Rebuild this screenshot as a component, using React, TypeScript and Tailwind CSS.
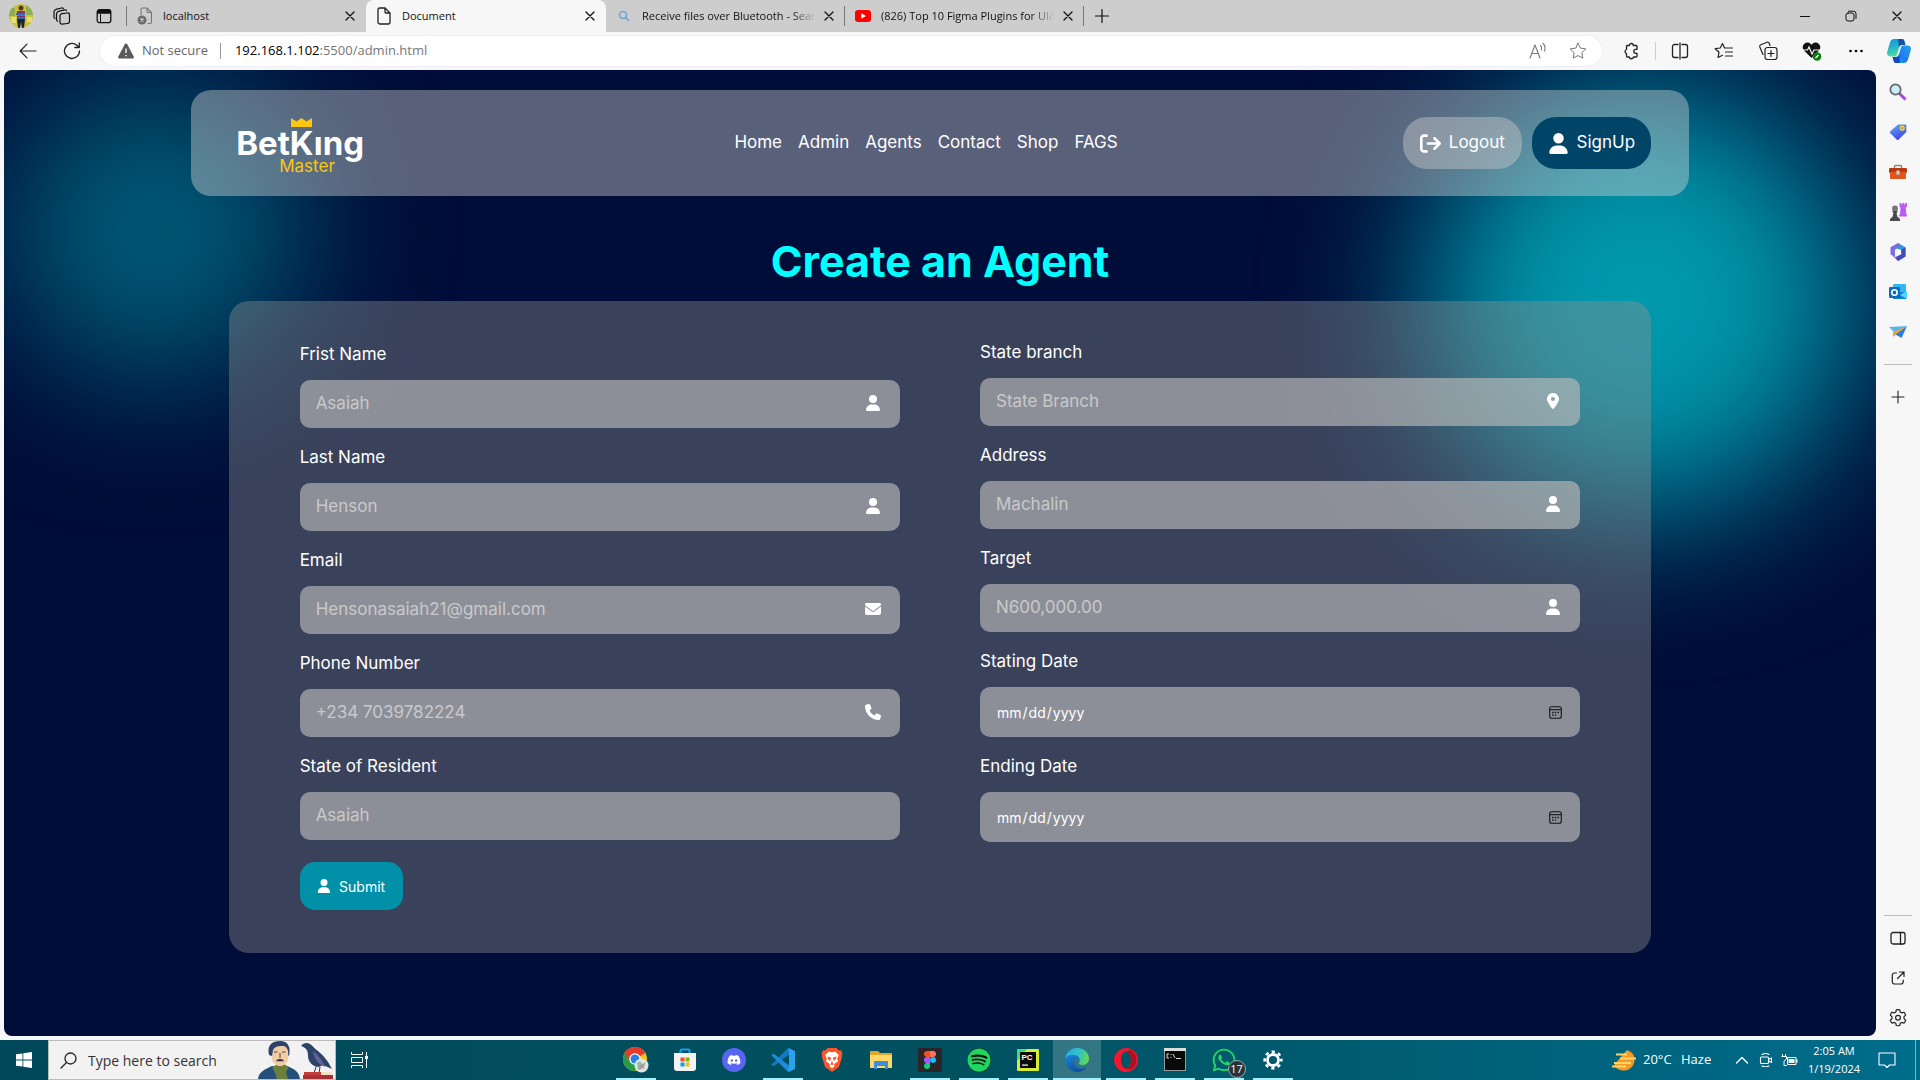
import type { ReactNode } from "react";
import {
  FaUser,
  FaEnvelope,
  FaPhone,
  FaLocationDot,
  FaArrowRightFromBracket,
  FaDiscord,
  FaSpotify,
  FaWhatsapp,
} from "react-icons/fa6";

/* ---------- Browser chrome icons ---------- */

const line = { fill: "none", stroke: "currentColor", strokeLinecap: "round", strokeLinejoin: "round" } as const;

function Svg({ size = 20, children, box = 20, width = 1 }: { size?: number; children: ReactNode; box?: number; width?: number }) {
  return (
    <svg width={size} height={size} viewBox={`0 0 ${box} ${box}`} {...line} strokeWidth={width} aria-hidden="true" className="shrink-0">
      {children}
    </svg>
  );
}

const CloseX = () => (
  <Svg size={10} box={10} width={1.3}>
    <path d="M1 1l8 8M9 1L1 9" />
  </Svg>
);

const Plus = () => (
  <Svg size={16} box={16} width={1.2}>
    <path d="M8 1.5v13M1.5 8h13" />
  </Svg>
);

const Avatar = () => (
  <svg width="24" height="24" viewBox="0 0 24 24" aria-hidden="true">
    <clipPath id="avatar">
      <circle cx="12" cy="12" r="12" />
    </clipPath>
    <g clipPath="url(#avatar)">
      <path fill="#c9c23c" d="M0 0h24v24H0z" />
      <path fill="#8fae54" d="M0 4h6v8H0zM17 2h7v9h-7z" />
      <path fill="#e6dd7a" d="M2 13h5v6H2zM18 13h5v5h-5z" />
      <circle cx="12" cy="4" r="2.5" fill="#5a3527" />
      <path fill="#8a2f66" d="M8 7h8v8H8z" />
      <path fill="#2d6bb5" d="M7 9h9v2H7zM8 13h8v2H8z" />
      <path fill="#d6522f" d="M8 11h8v1H8z" />
      <path fill="#1c2233" d="M8 15h8l-1 9h-2l-1-6-1 6H9z" />
    </g>
  </svg>
);

const Workspaces = () => (
  <Svg size={18} box={18} width={1.2}>
    <rect x="7" y="6" width="9.5" height="10.5" rx="2" transform="skewY(-6) translate(0 1.5)" />
    <path d="M4.6 14.2c-.8-.3-1.1-.9-1.1-1.800V7c0-1.500.6-2.200 2-2.600l6-1.600c1-.2 1.600.1 1.900.9" />
    <path d="M2 11.500C1.200 11.200 1 10.800 1 10V5c0-1.500.6-2.200 2-2.600L8.500 1c1-.2 1.500 0 1.800.600" />
  </Svg>
);

const TabActions = () => (
  <svg width="16" height="16" viewBox="0 0 16 16" aria-hidden="true">
    <rect x="1.200" y="1.700" width="13.600" height="13" rx="2.500" fill="none" stroke="#111" strokeWidth="1.300" />
    <path d="M1 5.800V4a2.800 2.800 0 012.800-2.800h8.400A2.800 2.800 0 0115 4v1.800z" fill="#111" />
    <path d="M4.500 6v8.500" stroke="#111" />
  </svg>
);

const PageBroken = () => (
  <svg width="16" height="18" viewBox="0 0 16 18" aria-hidden="true">
    <path d="M4 8V2.500C4 1.600 4.600 1 5.500 1H10l4.500 4.500V15c0 .900-.600 1.500-1.500 1.500h-2.500M10 1v3.500c0 .600.400 1 1 1h3.500" fill="none" stroke="#777" strokeWidth="1.100" />
    <circle cx="5" cy="13" r="4.500" fill="#6b6b6b" />
    <path d="M3.500 11.500l3 3m0-3l-3 3" stroke="#ddd" strokeWidth="1.100" />
  </svg>
);

const PageIcon = () => (
  <svg width="14" height="18" viewBox="0 0 14 18" aria-hidden="true">
    <path d="M1 3c0-1.100.700-2 1.800-2H8l5 5v9c0 1.100-.700 2-1.800 2H2.800C1.700 17 1 16.100 1 15zM8 1v4c0 .600.400 1 1 1h4" fill="none" stroke="#222" strokeWidth="1.300" />
  </svg>
);

const Youtube = () => (
  <svg width="16" height="12" viewBox="0 0 16 12" aria-hidden="true">
    <rect width="16" height="12" rx="3" fill="#f00" />
    <path d="M6.300 3.300v5.400L11 6z" fill="#fff" />
  </svg>
);

const tabs = [
  { title: "localhost", icon: <PageBroken />, active: false },
  { title: "Document", icon: <PageIcon />, active: true },
  {
    title: "Receive files over Bluetooth - Search",
    icon: (
      <svg width="12" height="12" viewBox="0 0 12 12" fill="none" stroke="#6ea5d3" strokeWidth="1.600" aria-hidden="true">
        <circle cx="5" cy="5" r="3.500" />
        <path d="M7.600 7.600L11 11" />
      </svg>
    ),
    active: false,
  },
  { title: "(826) Top 10 Figma Plugins for UI/UX", icon: <Youtube />, active: false },
];

function TabStrip() {
  return (
    <div className="flex h-8 items-stretch bg-[#cdcdcd] text-[#111]">
      <div className="flex w-[126px] items-center">
        <button aria-label="Profile" className="flex w-[42px] justify-center"><Avatar /></button>
        <button aria-label="Workspaces" className="flex w-10 justify-center"><Workspaces /></button>
        <button aria-label="Tab actions" className="flex w-[44px] justify-center"><TabActions /></button>
      </div>
      <div className="my-1.5 w-px bg-[#777]" />
      <div className="flex" role="tablist">
        {tabs.map((t, i) => (
          <div
            key={t.title}
            role="tab"
            aria-selected={t.active}
            className={
              t.active
                ? "flex w-[240px] items-center rounded-t-lg bg-[#f7f7f7] pr-[11px] pl-2.5"
                : "flex w-[239px] items-center pr-[11px] pl-2.5"
            }
          >
            <span className="flex w-4 shrink-0 justify-center">{t.icon}</span>
            <span
              className={
                i > 1
                  ? "ml-2.5 w-[174px] overflow-hidden bg-linear-to-r from-[#111] from-85% to-[#cdcdcd] bg-clip-text text-[11px] whitespace-nowrap text-transparent"
                  : "ml-2.5 w-[174px] overflow-hidden text-[11px] whitespace-nowrap"
              }
            >
              {t.title}
            </span>
            <button aria-label={`Close ${t.title}`} className="ml-auto"><CloseX /></button>
            {i > 1 && <span className="-mr-[11px] ml-[10px] h-5 w-px bg-[#777]" />}
          </div>
        ))}
      </div>
      <button aria-label="New tab" className="ml-2.5"><Plus /></button>
      <div className="ml-auto flex">
        <button aria-label="Minimize" className="flex w-[46px] items-center justify-center">
          <Svg size={10} box={10}><path d="M0 5.500h10" /></Svg>
        </button>
        <button aria-label="Restore" className="flex w-[46px] items-center justify-center">
          <Svg size={12} box={12}>
            <rect x="1" y="3" width="8" height="8" rx="2" />
            <path d="M3.500 1.200H8.500a2.500 2.500 0 012.500 2.500V8.500" />
          </Svg>
        </button>
        <button aria-label="Close window" className="flex w-[46px] items-center justify-center"><CloseX /></button>
      </div>
    </div>
  );
}

const Star = () => <path d="M10 2.200l2.400 4.900 5.400.8-3.900 3.800.9 5.400-4.800-2.500-4.800 2.500.9-5.400L2.200 7.900l5.400-.8z" />;

const Copilot = () => (
  <svg width="24" height="24" viewBox="0 0 24 24" aria-hidden="true">
    <defs>
      <linearGradient id="cpA" x1="0" y1="0" x2="0.300" y2="1">
        <stop offset="0" stopColor="#1690d8" />
        <stop offset="0.500" stopColor="#22b4cf" />
        <stop offset="1" stopColor="#4fdc9a" />
      </linearGradient>
      <linearGradient id="cpB" x1="1" y1="0" x2="0" y2="1">
        <stop offset="0" stopColor="#27a0ee" />
        <stop offset="0.600" stopColor="#1c7cf0" />
        <stop offset="1" stopColor="#18c8f0" />
      </linearGradient>
    </defs>
    <path d="M7 0h8c1.500 0 2 .8 2.500 2.500L18.500 6H15c-1.500 0-2.400.8-2.900 2.500L10 15.500c-.500 1.500-1.200 2-2.500 2H3.500C.5 17.500-.5 15.500.300 12.500L3 3.500C3.700 1.200 5 0 7 0z" fill="url(#cpA)" />
    <path d="M11 0h4c1.500 0 2 .8 2.500 2.500L18.500 6H15c-1.800 0-2.500.8-3 2.500z" fill="#14539f" />
    <path d="M17 24H9c-1.500 0-2-.8-2.500-2.500L5.500 18H9c1.500 0 2.400-.8 2.900-2.500L14 8.500c.5-1.500 1.200-2 2.500-2h4c3 0 4 2 3.200 5L21 20.500c-.7 2.300-2 3.500-4 3.500z" fill="url(#cpB)" />
    <path d="M13 24H9c-1.500 0-2-.8-2.500-2.500L5.500 18H9c1.800 0 2.500-.8 3-2.500z" fill="#1546c8" />
  </svg>
);

function Toolbar() {
  return (
    <div className="flex h-[38px] items-center text-[#222]">
      <button aria-label="Back" className="flex w-11 justify-center pl-3">
        <Svg size={18} box={18} width={1.2}><path d="M17 9H1.500M8 2.200L1.200 9 8 15.800" /></Svg>
      </button>
      <button aria-label="Reload" className="flex w-14 justify-center">
        <Svg size={18} box={18} width={1.3}><path d="M16.500 9a7.500 7.500 0 11-2.700-5.800L16 5.300M16.300 1v4.500h-4.500" /></Svg>
      </button>
      <div className="flex h-[30px] flex-1 items-center rounded-full bg-white pr-3.5 pl-[18px] text-[13px] text-[#666] shadow-[0_0_2px_#ddd]">
        <svg width="16" height="16" viewBox="0 0 16 16" aria-hidden="true">
          <path d="M8 .500c.500 0 .900.300 1.200.8l6.500 12.200c.500 1-.200 2-1.200 2h-13c-1 0-1.700-1-1.200-2L6.800 1.300C7.100.800 7.500.500 8 .500z" fill="#5a5a5a" />
          <path d="M8 5.500v4.500M8 12v1.300" stroke="#fff" strokeWidth="1.300" />
        </svg>
        <span className="ml-2">Not secure</span>
        <span className="ml-3 h-4 w-px bg-[#999]" />
        <span className="ml-[14px] text-[#777]"><span className="text-black">192.168.1.102</span>:5500/admin.html</span>
        <div className="ml-auto flex items-center gap-5 text-[#777]">
          <button aria-label="Read aloud">
            <Svg width={1.1}><path d="M2 17L7 4l5 13M3.800 12.500h6.400M12.500 4.500c1.200 1.200 1.500 3 1 4.500M15 2.500c2 2 2.500 5 1.500 7.500" /></Svg>
          </button>
          <button aria-label="Add to favorites"><Svg><Star /></Svg></button>
        </div>
      </div>
      <div className="flex items-center pl-[7px]">
        <button aria-label="Extensions" className="flex w-11 justify-center">
          <Svg width={1.3}><path d="M6 4.500h2.300a2 2 0 014 0H15c.600 0 1 .4 1 1v2.800h-1.200a2 2 0 000 4H16V15c0 .600-.400 1-1 1h-2.500a2.200 2.200 0 01-4.300 0H6.500c-.600 0-1-.4-1-1v-2.500a2.100 2.100 0 010-4V5.500c0-.600.200-1 .500-1z" /></Svg>
        </button>
        <span className="mx-0.5 h-[18px] w-px bg-[#ccc]" />
        <button aria-label="Split screen" className="flex w-11 justify-center">
          <Svg width={1.3}><path d="M8 3.500H4.500a2 2 0 00-2 2v9a2 2 0 002 2H8M12 3.500h3.500a2 2 0 012 2v9a2 2 0 01-2 2H12M10 2v16" /></Svg>
        </button>
        <button aria-label="Favorites" className="flex w-11 justify-center">
          <Svg width={1.2}><path d="M10.500 7L8.500 2.500 6.200 7l-5 .7L5 11.300l-1 5.200 4.500-2.200M11 7h7.500M11.500 11h7M11.500 15h7" /></Svg>
        </button>
        <button aria-label="Collections" className="flex w-11 justify-center">
          <Svg width={1.2}><path d="M5 13.500L1.800 6c-.300-.9 0-1.800 1-2.200L9 1.300c.9-.300 1.800 0 2.200 1L12 4.500" /><rect x="7" y="6.500" width="12" height="12" rx="2.500" /><path d="M13 9.500v6M10 12.500h6" /></Svg>
        </button>
        <button aria-label="Browser essentials" className="flex w-11 justify-center">
          <svg width="20" height="20" viewBox="0 0 20 20" aria-hidden="true">
            <path d="M9.500 17L2 9.500A4.600 4.600 0 018.700 3l.8.8.8-.8A4.600 4.600 0 0117 9.500z" fill="#111" />
            <path d="M0 9h5.500L7 6l3 7 2-4h7" fill="none" stroke="#f7f7f7" strokeWidth="1.200" />
            <circle cx="15" cy="15.500" r="4.300" fill="#107c10" />
            <path d="M13.500 17l3-3" stroke="#fff" strokeWidth="1.300" />
          </svg>
        </button>
        <button aria-label="Settings and more" className="flex w-11 justify-center">
          <svg width="16" height="4" viewBox="0 0 16 4" aria-hidden="true"><circle cx="2.500" cy="2" r="1.300" /><circle cx="8" cy="2" r="1.300" /><circle cx="13.500" cy="2" r="1.300" /></svg>
        </button>
        <button aria-label="Copilot" className="flex w-[42px] justify-center"><Copilot /></button>
      </div>
    </div>
  );
}

/* ---------- Right sidebar ---------- */

const sideTop: [string, ReactNode][] = [
  ["Search", <svg width="18" height="18" viewBox="0 0 18 18"><path d="M10.500 10.500l6 6" stroke="#b63df0" strokeWidth="3" /><path d="M10 10l2.500 2.500" stroke="#777" strokeWidth="2" /><circle cx="6.500" cy="6.500" r="5.200" fill="#c9ecfb" stroke="#666" strokeWidth="1.700" /></svg>],
  ["Shopping", <svg width="18" height="18" viewBox="0 0 18 18"><defs><linearGradient id="tag" x1="0" y1="0" x2=".5" y2="1"><stop stopColor="#64aef8" /><stop offset="1" stopColor="#3c48e8" /></linearGradient></defs><path d="M9 1.500h7.500c.5 0 .8.300.8.8V9L9.700 16.600a1.500 1.500 0 01-2.100 0L1.300 10.300a1.500 1.500 0 010-2.100z" fill="url(#tag)" /><circle cx="13.200" cy="5.200" r="1.900" fill="#8e9bd8" stroke="#ffd42a" strokeWidth="1.400" /></svg>],
  ["Tools", <svg width="18" height="16" viewBox="0 0 18 16"><path d="M5.500 4V2.500c0-.6.400-1 1-1h5c.6 0 1 .4 1 1V4" fill="none" stroke="#888" strokeWidth="1.500" /><rect y="4" width="18" height="5" rx="1" fill="#b93a12" /><path d="M1 8h16v6c0 .6-.4 1-1 1H2c-.6 0-1-.4-1-1z" fill="#e2551f" /><rect x="7.300" y="6.300" width="3.400" height="4.500" rx="1.500" fill="#c8ccd0" /></svg>],
  ["Games", <svg width="18" height="18" viewBox="0 0 18 18"><path d="M10.500 0h1.800v1.500h1V0h2v1.500h1V0H18v3.500l-1.300 1.200.6 6.300.7 1.500v1H10v-1l1-1.500.5-6.300-1-1.200z" fill="#b95df2" /><circle cx="6" cy="5.500" r="3" fill="#777" /><path d="M3.500 8h5v1.500h-1l.8 4L11 16v2H1v-2l2.700-2.500.8-4h-1z" fill="#4a4a4a" /></svg>],
  ["Microsoft 365", <svg width="18" height="18" viewBox="0 0 18 18"><path d="M9 0l7.500 4.300v4L12 10.500V7L6 5z" fill="#2b9be0" /><path d="M9 0L1.500 4.300v7L6 14V6.500L12 3z" fill="#7a6fe0" /><path d="M1.500 11.300L6 14l6.500-3V7l4 1.500v5L9 18z" fill="#a777d8" /><path d="M12.500 6.500L16.500 4.500v9L9 18l-2.500-3.500 6-3z" fill="#3a4fb8" /><circle cx="9" cy="9" r="2.800" fill="#f7f7f7" /></svg>],
  ["Outlook", <svg width="18" height="18" viewBox="0 0 18 18"><rect x="4" y="1" width="13" height="15" rx="1" fill="#35b5f0" /><path d="M4 8l13 1.500V16H4z" fill="#1681d4" /><path d="M18 8v8l-7-4z" fill="#50d9ff" /><rect y="4" width="11" height="11" rx="1.200" fill="#0f6cbd" /><circle cx="5.500" cy="9.500" r="2.700" fill="none" stroke="#fff" strokeWidth="1.600" /></svg>],
  ["Drop", <svg width="18" height="14" viewBox="0 0 18 14"><path d="M0 2L18 1 6 8z" fill="#54b5f5" /><path d="M18 1L4 12V7z" fill="#f3a51f" /><path d="M18 1L6.500 9.500 12.500 13z" fill="#2b7de0" /></svg>],
];

const Gear = ({ size = 20, width = 1.2 }: { size?: number; width?: number }) => (
  <Svg size={size} width={width}>
    <path d="M8.300 1.800c1.100-.300 2.300-.300 3.400 0l.5 2.200 1.500.9 2.200-.7c.8.800 1.400 1.800 1.700 2.900L16 8.700v1.900l1.700 1.600c-.3 1.100-.9 2.100-1.700 2.900l-2.300-.7-1.500.9-.5 2.200c-1.100.300-2.300.300-3.400 0L7.800 15.300l-1.500-.9-2.300.7c-.8-.8-1.400-1.800-1.700-2.900L4 10.600V8.700L2.300 7.100C2.600 6 3.200 5 4 4.200l2.300.7 1.500-.9z" />
    <circle cx="10" cy="9.700" r="2.400" />
  </Svg>
);

function Sidebar() {
  return (
    <aside className="flex w-11 shrink-0 flex-col items-center pt-0.5 text-[#222]">
      {sideTop.map(([name, icon]) => (
        <button key={name} aria-label={name} className="flex h-10 w-8 items-center justify-center">{icon}</button>
      ))}
      <div className="mt-3 h-px w-7 bg-[#bbb]" />
      <button aria-label="Customize" className="mt-3 flex h-10 w-8 items-center justify-center">
        <Svg size={14} box={14} width={1.1}><path d="M7 1v12M1 7h12" /></Svg>
      </button>
      <div className="mt-auto h-px w-7 bg-[#bbb]" />
      <button aria-label="Hide sidebar" className="mt-0.5 flex h-10 w-8 items-center justify-center">
        <Svg size={16} box={16} width={1.3}><rect x="1" y="2.500" width="14" height="11.500" rx="2" /><path d="M10.500 2.500V14" /></Svg>
      </button>
      <button aria-label="Open link in new window" className="flex h-10 w-8 items-center justify-center">
        <Svg size={14} box={14} width={1.2}><path d="M5.500 2H3.500A2.200 2.200 0 001.300 4.200v6.500A2.200 2.200 0 003.500 13H10a2.200 2.200 0 002.200-2.200V9M8.500 1H13v4.500M13 1L6.500 7.500" /></Svg>
      </button>
      <button aria-label="Settings" className="-mb-0.5 flex h-10 w-8 items-center justify-center"><Gear /></button>
    </aside>
  );
}

/* ---------- Web page ---------- */

function Logo() {
  return (
    <a href="#" aria-label="BetKing Master" className="flex w-[220px] flex-col pt-1.5 pl-[7px] text-white">
      <svg width="21" height="9" viewBox="0 0 21 9" className="ml-[55px]" aria-hidden="true">
        <path d="M0 0l5.500 3.500L10.500 0l5 3.500L21 0v9H0z" fill="#fec70d" />
      </svg>
      <span className="text-[33px] leading-[33px] font-bold">BetKıng</span>
      <span className="-mt-0.5 ml-[43px] text-[17px] leading-4 text-[#fec70d]">Master</span>
    </a>
  );
}

const CalendarIcon = () => (
  <svg width="13" height="13" viewBox="0 0 13 13" fill="none" stroke="#151515" aria-hidden="true">
    <rect x=".7" y=".7" width="11.600" height="11.600" rx="2" strokeWidth="1.100" />
    <path d="M.7 3.700h11.600" strokeWidth="1.100" />
    <path d="M3 6.500h1.500M5.700 6.500h1.500M8.500 6.500H10M3 9.200h1.500M5.700 9.200h1.500" strokeWidth="1.300" />
  </svg>
);

type FieldProps = { id: string; label: string; placeholder?: string; icon?: ReactNode; type?: string };

function Field({ id, label, placeholder, icon, type = "text" }: FieldProps) {
  return (
    <div className="mb-[17px] flex flex-col">
      <label htmlFor={id} className="mb-3.5 text-[17px] leading-6 text-white">{label}</label>
      <div className={type === "date" ? "flex h-[50px] items-center rounded-[10px] bg-[#bababa]/65" : "flex h-12 items-center rounded-[10px] bg-[#bababa]/65 pb-0.5"}>
        <input
          id={id}
          type={type}
          placeholder={placeholder}
          className={
            type === "date"
              ? "h-full min-w-0 flex-1 bg-transparent px-4 text-[14px] text-white outline-none [&::-webkit-calendar-picker-indicator]:hidden"
              : "h-full min-w-0 flex-1 bg-transparent px-4 text-[17px] text-white outline-none placeholder:text-[#c9c9c9]"
          }
        />
        {icon && <span className="mr-[19px] text-[16px] text-white">{icon}</span>}
        {type === "date" && <span className="mr-[18px]"><CalendarIcon /></span>}
      </div>
    </div>
  );
}

function Page() {
  return (
    <main className="relative min-w-0 flex-1 overflow-hidden rounded-lg bg-[#000d38] pb-[83px] font-[Inter,sans-serif]">
      <div className="absolute top-[10px] left-0 size-[300px] rounded-full bg-[#005a76] blur-[70px]" />
      <div className="absolute top-[15px] right-[20px] size-[430px] rounded-full bg-[#0098ac] blur-[75px]" />
      <div className="relative">
        <header className="mx-auto mt-5 flex h-[106px] w-4/5 items-center justify-between rounded-[20px] bg-[#d9d9d9]/41 px-[38px]">
          <Logo />
          <nav className="flex gap-4 text-[17px] text-white">
            {["Home", "Admin", "Agents", "Contact", "Shop", "FAGS"].map((l) => (
              <a key={l} href="#">{l}</a>
            ))}
          </nav>
          <div className="flex gap-2.5 text-[17px] text-white">
            <button className="flex h-[52px] w-[119px] items-center justify-center gap-2 rounded-[24px] bg-[#c8c8c8]/45">
              <FaArrowRightFromBracket size={21} />Logout
            </button>
            <button className="flex h-[52px] w-[119px] items-center justify-center gap-2 rounded-[24px] bg-[#004468]">
              <FaUser size={21} />SignUp
            </button>
          </div>
        </header>
        <h1 className="mt-[41px] text-center text-[43px] leading-[48px] font-bold text-[#00ffff]">Create an Agent</h1>
        <form className="mx-auto mt-4 grid w-[76%] grid-cols-2 gap-20 rounded-[20px] bg-[#919191]/40 px-[71px] pt-[39px] pb-[43px]">
          <div className="pt-0.5">
            <Field id="first" label="Frist Name" placeholder="Asaiah" icon={<FaUser />} />
            <Field id="last" label="Last Name" placeholder="Henson" icon={<FaUser />} />
            <Field id="email" label="Email" placeholder="Hensonasaiah21@gmail.com" icon={<FaEnvelope />} />
            <Field id="phone" label="Phone Number" placeholder="+234 7039782224" icon={<FaPhone />} />
            <Field id="resident" label="State of Resident" placeholder="Asaiah" />
            <button type="button" className="mt-[22px] flex h-12 w-[103px] items-center justify-center gap-2 rounded-[15px] bg-[#0091a8] text-[14px] text-white">
              <FaUser size={14} />Submit
            </button>
          </div>
          <div>
            <Field id="branch" label="State branch" placeholder="State Branch" icon={<FaLocationDot />} />
            <Field id="address" label="Address" placeholder="Machalin" icon={<FaUser />} />
            <Field id="target" label="Target" placeholder="N600,000.00" icon={<FaUser />} />
            <Field id="start" label="Stating Date" type="date" />
            <Field id="end" label="Ending Date" type="date" />
          </div>
        </form>
      </div>
    </main>
  );
}

/* ---------- Taskbar ---------- */

const Chrome = () => (
  <svg width="26" height="26" viewBox="0 0 26 26">
    <circle cx="12" cy="12" r="12" fill="#fbc116" />
    <path d="M12 12L1.600 6A12 12 0 0122.400 6z" fill="#e33b2e" />
    <path d="M12 12L1.600 6A12 12 0 0012 24l5-9z" fill="#269b4a" />
    <path d="M12 6h10.400A12 12 0 001.600 6L7 15z" fill="#e33b2e" />
    <circle cx="12" cy="12" r="5.800" fill="#fff" />
    <circle cx="12" cy="12" r="4.500" fill="#2b7de9" />
    <circle cx="18.500" cy="18.500" r="7" fill="#dfe5e4" />
    <path d="M14 16l3-2 2 3 4-2-2 4 1 3-4-1-3 2z" fill="#8fc0a8" />
    <path d="M15 21l4-4 3 1-5 5z" fill="#b98da0" />
  </svg>
);

const Store = () => (
  <svg width="24" height="24" viewBox="0 0 24 24">
    <path d="M7.500 6V2.500c0-.6.400-1 1-1h7c.6 0 1 .4 1 1V6" fill="none" stroke="#1a9de8" strokeWidth="2" />
    <path d="M1 5h22v15a3 3 0 01-3 3H4a3 3 0 01-3-3z" fill="#f3f3f3" />
    <path d="M7.500 9.500h4v4h-4z" fill="#f25022" /><path d="M12.500 9.500h4v4h-4z" fill="#7fba00" />
    <path d="M7.500 14.500h4v4h-4z" fill="#00a4ef" /><path d="M12.500 14.500h4v4h-4z" fill="#ffb900" />
  </svg>
);

const Discord = () => (
  <span className="flex size-6 items-center justify-center rounded-full bg-[#5865f2] text-white"><FaDiscord size={14} /></span>
);

const VsCode = () => (
  <svg width="24" height="24" viewBox="0 0 24 24">
    <path d="M17.500 0L24 3v18l-6.500 3L5.500 12z" fill="#2aa3ee" />
    <path d="M18 6.500L2.500 18.500.5 16.500 17.500 0z" fill="#1379c4" />
    <path d="M18 17.500L2.500 5.500.5 7.500 17.500 24z" fill="#1b8ddc" />
    <path d="M18 6.500v11L10.700 12z" fill="#005160" />
  </svg>
);

const Brave = () => (
  <svg width="22" height="24" viewBox="0 0 22 24">
    <path d="M6.500 0h9l2.200 2.500L20 2.300l1.500 3.200L20.800 8l.3 1L18 19l-7 5-7-5L.900 9l.3-1-.7-2.500L2 2.300l2.300.2z" fill="#fb542b" />
    <path d="M11 4.200l3.500-.5 3.300 3.500-1.700 3.500 1 2.500-3.500 2.500-.8 1.200 1 1-2.800 2.300-2.800-2.300 1-1-.8-1.200-3.500-2.500 1-2.500-1.700-3.500 3.300-3.500z" fill="#fff" />
    <path d="M6.500 8.500l3.500 1-.7 3.500L7 11zM15.500 8.500l-3.500 1 .7 3.500L15 11zM11 13l1.500 3.200-1.500 1-1.500-1z" fill="#fb542b" />
  </svg>
);

const Folder = () => (
  <svg width="22" height="20" viewBox="0 0 22 20">
    <path d="M0 2c0-.6.400-1 1-1h7l2 2h11c.6 0 1 .4 1 1v14H0z" fill="#dfa72c" />
    <path d="M0 5h22v13H0z" fill="#ffd968" />
    <path d="M4 19v-7c0-.6.400-1 1-1h12c.6 0 1 .4 1 1v7h-3v-3H7v3z" fill="#3f8edb" />
  </svg>
);

const Figma = () => (
  <svg width="24" height="24" viewBox="0 0 24 24">
    <rect width="24" height="24" fill="#2b2528" rx="1" />
    <path d="M9 3h3v6H9a3 3 0 010-6z" fill="#f24e1e" /><path d="M12 3h3a3 3 0 010 6h-3z" fill="#ff7262" />
    <path d="M9 9h3v6H9a3 3 0 010-6z" fill="#a259ff" /><circle cx="15" cy="12" r="3" fill="#1abcfe" />
    <path d="M9 15h3v3a3 3 0 11-3-3z" fill="#0acf83" />
  </svg>
);

const PyCharm = () => (
  <svg width="22" height="22" viewBox="0 0 22 22">
    <rect width="22" height="22" rx="1" fill="#d8ec3a" /><path d="M0 0h10L0 12z" fill="#3be07c" />
    <path d="M3 3h16v16H3z" fill="#0a0a0a" />
    <text x="4.500" y="11" fill="#fff" fontSize="8" fontWeight="700" fontFamily="Liberation Sans">PC</text>
    <path d="M5 15.500h6v1.200H5z" fill="#fff" />
  </svg>
);

const Edge = () => (
  <svg width="24" height="24" viewBox="0 0 24 24">
    <defs>
      <linearGradient id="edgeTop" x1="0" y1=".3" x2="1" y2=".5"><stop stopColor="#2aa9e8" /><stop offset=".6" stopColor="#34c4c0" /><stop offset="1" stopColor="#69d94a" /></linearGradient>
      <linearGradient id="edgeLow" x1="0" y1="0" x2=".6" y2="1"><stop stopColor="#1b87de" /><stop offset="1" stopColor="#0f4e9e" /></linearGradient>
    </defs>
    <path d="M.3 10.500C1 4.500 6 0 12 0c7 0 12 5 12 10.500 0 4-3 6.500-6.500 6.500-2.500 0-4-1-3.500-2 .8-1.500 1-2.500.500-4C13.800 8.500 11 7 8 7 4 7 1.500 9 .3 10.500z" fill="url(#edgeTop)" />
    <path d="M.1 11C1.500 8.500 4.500 7 8 7c3 0 5.800 1.500 6.500 4-1.500-1.500-4-1-5 1-1.500 3 .5 7.500 5.500 8.500 3 .6 5.500-.3 7.500-2A12 12 0 0112 24C5 24-.3 18 .1 11z" fill="url(#edgeLow)" />
  </svg>
);

const Opera = () => (
  <svg width="24" height="24" viewBox="0 0 24 24">
    <path fillRule="evenodd" d="M12 0a12 12 0 100 24 12 12 0 000-24zm0 3.500c2.800 0 5 3.800 5 8.500s-2.200 8.500-5 8.500S7 16.700 7 12s2.200-8.500 5-8.500z" fill="#f0182e" />
    <path d="M12 3.500c4-3 8.500 0 10 5 1 5 0 9-3 12-2 1.500-4.500 1.500-7 0 2.800 0 5-3.800 5-8.500S14.800 3.500 12 3.500z" fill="#b3101f" />
  </svg>
);

const Terminal = () => (
  <svg width="22" height="24" viewBox="0 0 22 24">
    <rect x=".5" y=".5" width="21" height="22" fill="#0a0a0a" stroke="#999" /><path d="M0 0h22v3H0z" fill="#ddd" />
    <path d="M5 6H3v4h2M7 6v1M7 9v1M9 6l2 4M12 10.500h5" fill="none" stroke="#ddd" />
  </svg>
);

const WhatsApp = () => (
  <span className="relative flex size-6 items-center justify-center text-[#27d366]">
    <FaWhatsapp size={26} className="shrink-0" />
    <span className="absolute -right-[10px] -bottom-1.5 flex size-[18px] items-center justify-center rounded-full border border-[#9aa] bg-[#263238] text-[11px] text-white">17</span>
  </span>
);

const GearSolid = () => (
  <svg width="20" height="20" viewBox="0 0 20 20" fill="none" stroke="#fff">
    <circle cx="10" cy="10" r="5.500" strokeWidth="2.800" />
    <circle cx="10" cy="10" r="8.300" strokeWidth="2.600" strokeDasharray="3.260 3.260" strokeDashoffset="1.630" />
  </svg>
);

const apps: [string, ReactNode, boolean][] = [
  ["Google Chrome", <Chrome />, true],
  ["Microsoft Store", <Store />, false],
  ["Discord", <Discord />, false],
  ["Visual Studio Code", <VsCode />, true],
  ["Brave", <Brave />, false],
  ["File Explorer", <Folder />, false],
  ["Figma", <Figma />, true],
  ["Spotify", <span className="rounded-full bg-[#111]"><FaSpotify size={24} color="#1ed760" /></span>, true],
  ["PyCharm", <PyCharm />, true],
  ["Microsoft Edge", <Edge />, true],
  ["Opera", <Opera />, true],
  ["Command Prompt", <Terminal />, true],
  ["WhatsApp", <WhatsApp />, true],
  ["Settings", <GearSolid />, true],
];

const Portrait = () => (
  <svg width="78" height="38" viewBox="0 0 78 38" aria-hidden="true">
    <path d="M1 38c1-8 8-10 14-13h15c7 3 12 5 13 13z" fill="#24507c" />
    <path d="M15 26l6-3h6l5 3-3 5 2 7H20l-2-6z" fill="#6d7f3c" />
    <path d="M14 9c0-5 4-7 9-7s9 2 9 7c0 9-2 16-9 16s-9-7-9-16z" fill="#f0cda6" />
    <path d="M12 14C10 5 14 0 23 0c8 0 11 6 9 15l-1-1c1-4-1-8-4-9-5 0-9 0-11 4l-1 6z" fill="#2c4468" />
    <path d="M19.500 19c2-1.300 5-1.300 7 0v1.300h-7z" fill="#3b3238" />
    <path d="M17 11h3.500M25 11h3.500M23 12v5" stroke="#5a4134" strokeWidth="1" />
    <path d="M44 5c2-3 6-4 9-2 3 2 4 4 8 7 6 5 10 10 14 18l-9-4-4 2c-6 0-11-5-11-11 0-5-1-8-7-10z" fill="#2d4466" />
    <path d="M56 10c6 5 10 10 12 16-7-3-11-8-12-16z" fill="#65609b" />
    <path d="M59 26l-2 6M63 26l-1 6" stroke="#333" />
    <path d="M47 31h28v3H47z" fill="#c43b3b" /><path d="M64 31h11v7H64z" fill="#efe2c4" /><path d="M46 34h30v4H46z" fill="#a82f35" />
  </svg>
);

function Taskbar() {
  return (
    <footer className="flex h-10 shrink-0 items-stretch bg-linear-to-r from-[#00485a] via-[#005160] to-[#006d8c] text-white">
      <div className="flex flex-1">
        <button aria-label="Start" className="flex w-12 items-center justify-center">
          <svg width="16" height="16" viewBox="0 0 16 16" fill="#fff" aria-hidden="true">
            <path d="M0 2.300l6.500-.9v6.200H0zM7.300 1.300L16 0v7.600H7.300zM0 8.400h6.500v6.200L0 13.700zM7.300 8.400H16V16l-8.700-1.300z" />
          </svg>
        </button>
        <div className="flex w-[288px] items-center border border-[#bbb] bg-[#f2f2f2] pl-[11px] text-[#222]">
          <Svg size={17} box={17} width={1.3}><circle cx="10.500" cy="6.500" r="5.500" /><path d="M6.500 10.500L1 16" /></Svg>
          <input aria-label="Search" placeholder="Type here to search" className="ml-[11px] w-[160px] bg-transparent text-[14px] outline-none placeholder:text-[#333]" />
          <span className="ml-auto"><Portrait /></span>
        </div>
        <button aria-label="Task view" className="flex w-12 items-center justify-center">
          <svg width="18" height="16" viewBox="0 0 18 16" fill="none" stroke="#fff" aria-hidden="true">
            <path d="M.500 0v2.500h11V0M.500 16v-2.500h11V16M.500 5.500h11v5H.500zM15.500 0v16" /><path d="M14 4h3v3h-3z" fill="#fff" stroke="none" />
          </svg>
        </button>
      </div>
      <div className="flex gap-px pr-3">
        {apps.map(([name, icon, open]) => (
          <button
            key={name}
            aria-label={name}
            className={name === "Microsoft Edge" ? "relative flex w-12 items-center justify-center bg-white/20" : "relative flex w-12 items-center justify-center"}
          >
            {icon}
            {open && <span className={name === "Microsoft Edge" ? "absolute inset-x-0 bottom-0 h-0.5 bg-[#a5efff]" : "absolute inset-x-1 bottom-0 h-0.5 bg-[#a5efff]"} />}
          </button>
        ))}
      </div>
      <div className="flex flex-1 items-center justify-end text-[14px]">
        <svg width="25" height="23" viewBox="0 0 25 23" aria-hidden="true">
          <path d="M15 1c6 2 9 7 7 13s-8 9-14 7c-3-1-5-3-6-5z" fill="#f59a23" />
          <path d="M4 5.500h11M8 9.500h16M2 14h17M0 17.500h14" stroke="#fbd56b" strokeWidth="1.800" />
        </svg>
        <span className="ml-1.5 w-[38px] text-[13px] whitespace-nowrap">20°C</span>
        <span className="w-[54px] text-[13px]">Haze</span>
        <Svg size={14} box={14} width={1.3}><path d="M1.500 10L7 4.500l5.500 5.500" /></Svg>
        <span className="ml-2.5">
          <Svg size={14} box={14} width={1.1}><rect x="1.500" y="4" width="8" height="6.500" rx="1" /><path d="M9.500 6.500L12.500 5v4.500l-3-1.500M3 1.500C5 .3 8 .3 10 1.500M3 13c2 1 5 1 7 0" /></Svg>
        </span>
        <svg width="17" height="14" viewBox="0 0 17 14" className="ml-2 shrink-0" fill="none" stroke="#fff" aria-hidden="true">
          <path d="M1.500 1v3M4.500 1v3M.500 3.500h5v2.500l-2.500 2v4.500h3M6.500 4.500h8.500v7H6.500z" /><path d="M7.500 6h6v4h-6zM15 6.500h1.500v3H15z" fill="#fff" stroke="none" />
        </svg>
        <div className="ml-2 flex w-[56px] flex-col items-center text-[11px] leading-[18px]"><span>2:05 AM</span><span>1/19/2024</span></div>
        <button aria-label="Notifications" className="ml-4 flex w-[18px] justify-center">
          <Svg size={18} box={18} width={1.1}><path d="M1 2h16v12h-5.500L9 16.500 6.500 14H1z" /></Svg>
        </button>
        <span className="mr-1 ml-[19px] h-10 w-px bg-white/50" />
      </div>
    </footer>
  );
}

export default function App() {
  return (
    <div className="flex min-h-screen flex-col bg-[#f7f7f7] font-['Open_Sans',sans-serif]">
      <TabStrip />
      <Toolbar />
      <div className="flex flex-1 pb-1 pl-1">
        <Page />
        <Sidebar />
      </div>
      <Taskbar />
    </div>
  );
}
